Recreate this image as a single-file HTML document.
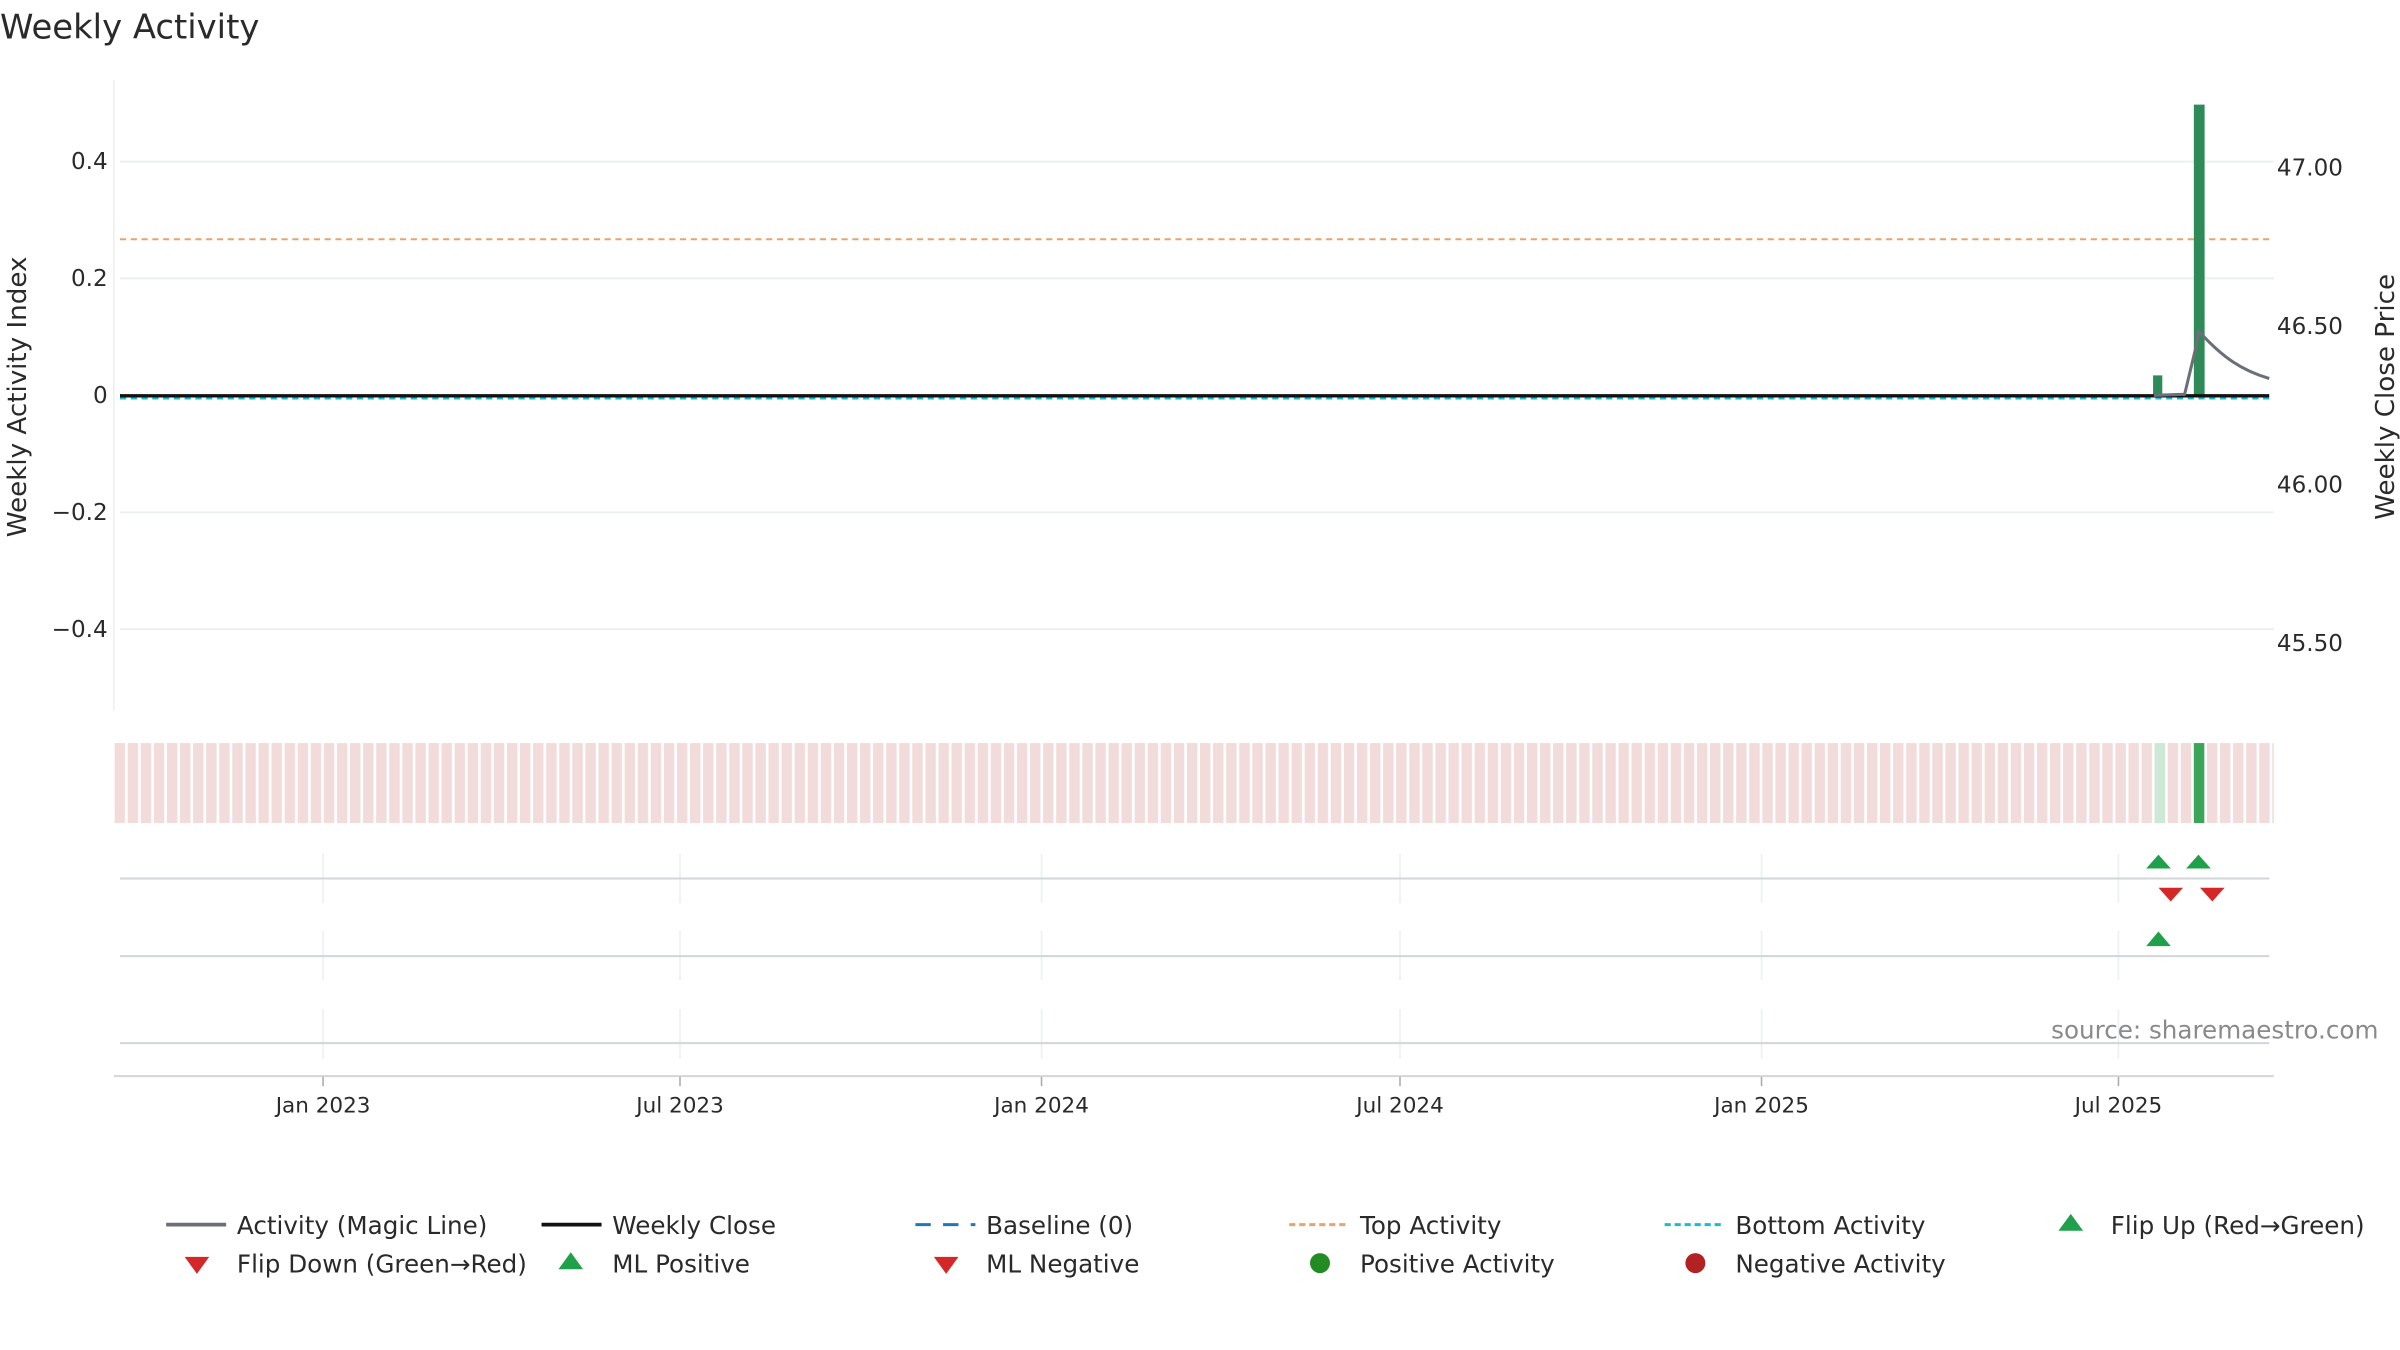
<!DOCTYPE html>
<html><head><meta charset="utf-8"><style>
html,body{margin:0;padding:0;background:#fff;}
svg{display:block;font-family:"DejaVu Sans","Liberation Sans",sans-serif;}
</style></head><body>
<svg width="2400" height="1350" viewBox="0 0 1560 877.5" xmlns="http://www.w3.org/2000/svg">
<defs>
<pattern id="st" x="74.5" y="0" width="8.5" height="900" patternUnits="userSpaceOnUse">
<rect x="0" y="0" width="6.8" height="900" fill="#f2dcdb"/>
</pattern>
</defs>
<rect width="1560" height="877.5" fill="#fff"/>
<text x="0" y="25" font-size="22" fill="#2a2a2a">Weekly Activity</text>

<!-- main plot -->
<line x1="74" y1="52" x2="74" y2="462" stroke="#eceff1" stroke-width="1"/>
<g stroke="#eceff1" stroke-width="1.2">
<line x1="78" y1="105" x2="1478" y2="105"/>
<line x1="78" y1="181" x2="1478" y2="181"/>
<line x1="78" y1="333" x2="1478" y2="333"/>
<line x1="78" y1="409" x2="1478" y2="409"/>
</g>
<g font-size="15" fill="#2a2a2a" text-anchor="end">
<text x="70" y="110">0.4</text>
<text x="70" y="186">0.2</text>
<text x="70" y="262">0</text>
<text x="70" y="338">−0.2</text>
<text x="70" y="414">−0.4</text>
</g>
<g font-size="15" fill="#2a2a2a">
<text x="1480" y="114">47.00</text>
<text x="1480" y="217">46.50</text>
<text x="1480" y="320">46.00</text>
<text x="1480" y="423">45.50</text>
</g>
<text transform="translate(17,258) rotate(-90)" font-size="17" fill="#2a2a2a" text-anchor="middle">Weekly Activity Index</text>
<text transform="translate(1556,258) rotate(-90)" font-size="17" fill="#2a2a2a" text-anchor="middle">Weekly Close Price</text>

<line x1="78" y1="155.5" x2="1475" y2="155.5" stroke="#e8a46a" stroke-width="1.3" stroke-dasharray="4,3"/>
<rect x="1426" y="68" width="7" height="189" fill="#2e8b57"/>
<rect x="1399.5" y="244" width="6" height="13" fill="#2e8b57"/>
<line x1="78" y1="259" x2="1475" y2="259" stroke="#17becf" stroke-width="1.3" stroke-dasharray="4,3"/>
<line x1="78" y1="257.3" x2="1475" y2="257.3" stroke="#111" stroke-width="2.2"/>
<path d="M1400,257 L1420,256.3 L1428,223 L1429,215 C1445,233 1458,241 1475,246" fill="none" stroke="#6c6f78" stroke-width="2"/>

<!-- strip -->
<rect x="74" y="483" width="1404" height="52" fill="url(#st)"/>
<rect x="1400.5" y="483" width="6.8" height="52" fill="#cde8d4"/>
<rect x="1426" y="483" width="6.8" height="52" fill="#3ba55a"/>

<!-- marker rows -->
<g stroke="#eceff1" stroke-width="1">
<line x1="210" y1="555" x2="210" y2="587"/><line x1="442" y1="555" x2="442" y2="587"/><line x1="677" y1="555" x2="677" y2="587"/><line x1="910" y1="555" x2="910" y2="587"/><line x1="1145" y1="555" x2="1145" y2="587"/><line x1="1377" y1="555" x2="1377" y2="587"/>
<line x1="210" y1="605" x2="210" y2="637"/><line x1="442" y1="605" x2="442" y2="637"/><line x1="677" y1="605" x2="677" y2="637"/><line x1="910" y1="605" x2="910" y2="637"/><line x1="1145" y1="605" x2="1145" y2="637"/><line x1="1377" y1="605" x2="1377" y2="637"/>
<line x1="210" y1="656" x2="210" y2="688"/><line x1="442" y1="656" x2="442" y2="688"/><line x1="677" y1="656" x2="677" y2="688"/><line x1="910" y1="656" x2="910" y2="688"/><line x1="1145" y1="656" x2="1145" y2="688"/><line x1="1377" y1="656" x2="1377" y2="688"/>
</g>
<g stroke="#d3d6d8" stroke-width="1.3">
<line x1="78" y1="571" x2="1475" y2="571"/>
<line x1="78" y1="621.5" x2="1475" y2="621.5"/>
<line x1="78" y1="678" x2="1475" y2="678"/>
<line x1="74" y1="699.5" x2="1478" y2="699.5"/>
</g>
<g stroke="#aaa" stroke-width="1">
<line x1="210" y1="700" x2="210" y2="706"/><line x1="442" y1="700" x2="442" y2="706"/><line x1="677" y1="700" x2="677" y2="706"/><line x1="910" y1="700" x2="910" y2="706"/><line x1="1145" y1="700" x2="1145" y2="706"/><line x1="1377" y1="700" x2="1377" y2="706"/>
</g>
<g fill="#1fa04a">
<path d="M1395,564.5 L1411,564.5 L1403,555.5Z"/>
<path d="M1421,564.5 L1437,564.5 L1429,555.5Z"/>
<path d="M1395,615 L1411,615 L1403,605.5Z"/>
</g>
<g fill="#d62728">
<path d="M1403,577 L1419,577 L1411,586Z"/>
<path d="M1430,577 L1446,577 L1438,586Z"/>
</g>
<text x="1546" y="675" font-size="16" fill="#8a8a8a" text-anchor="end">source: sharemaestro.com</text>
<g font-size="14" fill="#2a2a2a" text-anchor="middle">
<text x="210" y="723">Jan 2023</text><text x="442" y="723">Jul 2023</text><text x="677" y="723">Jan 2024</text><text x="910" y="723">Jul 2024</text><text x="1145" y="723">Jan 2025</text><text x="1377" y="723">Jul 2025</text>
</g>

<!-- legend -->
<g font-size="16" fill="#2a2a2a">
<line x1="108" y1="796" x2="147" y2="796" stroke="#6c6f78" stroke-width="2.5"/>
<text x="154" y="802">Activity (Magic Line)</text>
<line x1="352" y1="796" x2="391" y2="796" stroke="#111" stroke-width="2.5"/>
<text x="398" y="802">Weekly Close</text>
<line x1="595" y1="796" x2="634" y2="796" stroke="#1f77b4" stroke-width="2" stroke-dasharray="10,8"/>
<text x="641" y="802">Baseline (0)</text>
<line x1="838" y1="796" x2="877" y2="796" stroke="#e8a46a" stroke-width="2" stroke-dasharray="4,2.5"/>
<text x="884" y="802">Top Activity</text>
<line x1="1082" y1="796" x2="1121" y2="796" stroke="#17becf" stroke-width="2" stroke-dasharray="4,2.5"/>
<text x="1128" y="802">Bottom Activity</text>
<path d="M1338,800 L1354,800 L1346,789Z" fill="#1fa04a"/>
<text x="1372" y="802">Flip Up (Red→Green)</text>
<path d="M120,817 L136,817 L128,828Z" fill="#d62728"/>
<text x="154" y="827">Flip Down (Green→Red)</text>
<path d="M363,825 L379,825 L371,814Z" fill="#1fa04a"/>
<text x="398" y="827">ML Positive</text>
<path d="M607,817 L623,817 L615,828Z" fill="#d62728"/>
<text x="641" y="827">ML Negative</text>
<circle cx="858" cy="821" r="6.5" fill="#228b22"/>
<text x="884" y="827">Positive Activity</text>
<circle cx="1102" cy="821" r="6.5" fill="#b22222"/>
<text x="1128" y="827">Negative Activity</text>
</g>
</svg>
</body></html>
